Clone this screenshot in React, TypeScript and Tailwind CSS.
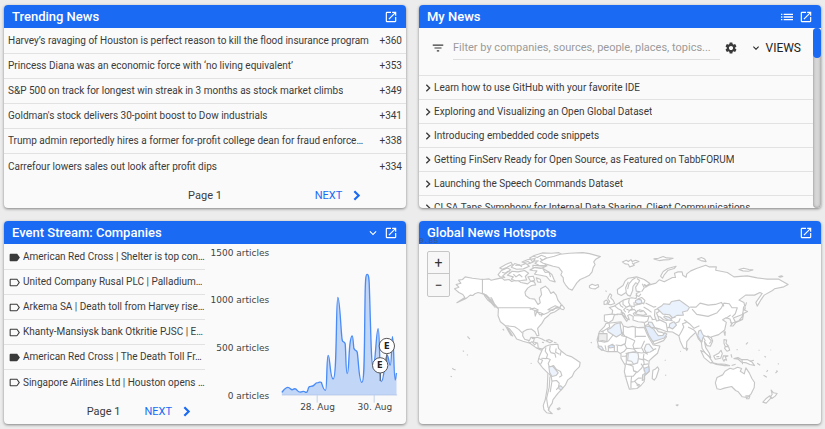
import type { FC, ReactNode } from "react";
import {
  MdChevronRight,
  MdExpandMore,
  MdFilterList,
  MdLabel,
  MdLabelOutline,
  MdList,
  MdOpenInNew,
  MdSettings,
} from "react-icons/md";

const trending = [
  { title: "Harvey’s ravaging of Houston is perfect reason to kill the flood insurance program", score: "+360" },
  { title: "Princess Diana was an economic force with ‘no living equivalent’", score: "+353" },
  { title: "S&P 500 on track for longest win streak in 3 months as stock market climbs", score: "+349" },
  { title: "Goldman's stock delivers 30-point boost to Dow industrials", score: "+341" },
  { title: "Trump admin reportedly hires a former for-profit college dean for fraud enforce…", score: "+338" },
  { title: "Carrefour lowers sales out look after profit dips", score: "+334" },
];

const myNews = [
  "Learn how to use GitHub with your favorite IDE",
  "Exploring and Visualizing an Open Global Dataset",
  "Introducing embedded code snippets",
  "Getting FinServ Ready for Open Source, as Featured on TabbFORUM",
  "Launching the Speech Commands Dataset",
  "CLSA Taps Symphony for Internal Data Sharing, Client Communications",
];

const events = [
  { title: "American Red Cross | Shelter is top con…", read: true },
  { title: "United Company Rusal PLC | Palladium…", read: false },
  { title: "Arkema SA | Death toll from Harvey rise…", read: false },
  { title: "Khanty-Mansiysk bank Otkritie PJSC | E…", read: false },
  { title: "American Red Cross | The Death Toll Fr…", read: true },
  { title: "Singapore Airlines Ltd | Houston opens …", read: false },
];

type PanelProps = {
  title: string;
  actions?: ReactNode;
  children: ReactNode;
};

const Panel: FC<PanelProps> = ({ title, actions, children }) => (
  <section className="relative flex min-w-0 flex-col overflow-hidden rounded bg-[#fafafa] shadow-[0_1px_3px_rgba(0,0,0,0.45)]">
    <header className="flex h-[23px] shrink-0 items-center justify-between bg-[#1a6af4] px-2 text-white">
      <h2 className="text-[13px] font-medium leading-5">{title}</h2>
      <div className="flex items-center gap-1">
        {actions}
        <button aria-label={`Open ${title}`}>
          <MdOpenInNew className="size-[14px]" />
        </button>
      </div>
    </header>
    {children}
  </section>
);

const Chevron: FC<{ className: string }> = ({ className }) => (
  <svg viewBox="0 0 12 12" fill="none" stroke="currentColor" className={className}>
    <path d="M4 2l4 4-4 4" />
  </svg>
);

const NextButton: FC = () => (
  <button className="flex items-center gap-2 text-[11px] text-[#1a6af4]">
    NEXT
    <Chevron className="size-[13px] stroke-2" />
  </button>
);

const TrendingNews: FC = () => (
  <Panel title="Trending News">
    <ul className="pt-px">
      {trending.map((item) => (
        <li
          key={item.title}
          className="flex h-[25px] items-center justify-between gap-1 border-b border-[#e2e2e2] px-1 last:border-b-0"
        >
          <span className="truncate">{item.title}</span>
          <span>{item.score}</span>
        </li>
      ))}
    </ul>
    <div className="grid h-[29px] grid-cols-3 items-center pt-1">
      <span className="col-start-2 text-center text-[11px]">Page 1</span>
      <div className="flex justify-center">
        <NextButton />
      </div>
    </div>
  </Panel>
);

const MyNews: FC = () => (
  <Panel
    title="My News"
    actions={
      <button aria-label="List view">
        <MdList className="size-4" />
      </button>
    }
  >
    <div className="flex h-0 grow">
      <div className="min-w-0 grow overflow-y-auto [scrollbar-width:none]">
        <div className="flex h-12 items-center border-b border-[#e2e2e2] px-3 pb-2">
          <MdFilterList className="size-[14px] shrink-0" />
          <input
            type="text"
            aria-label="Filter news"
            placeholder="Filter by companies, sources, people, places, topics..."
            className="ml-2 h-6 min-w-0 grow border-b border-[#dedede] bg-transparent text-[11px] outline-none placeholder:text-[#9a9a9a]"
          />
          <button aria-label="Settings" className="ml-1">
            <MdSettings className="size-[14px]" />
          </button>
          <button className="ml-3 flex items-center gap-1 text-xs text-[#222]">
            <MdExpandMore className="size-3" />
            VIEWS
          </button>
        </div>
        <ul>
          {myNews.map((title) => (
            <li key={title} className="flex h-6 items-center gap-px border-b border-[#e2e2e2] pl-1">
              <Chevron className="size-[10px] shrink-0 stroke-[1.6]" />
              <span className="truncate">{title}</span>
            </li>
          ))}
        </ul>
      </div>
      <div className="w-2 shrink-0 rounded-full bg-[#d6d6d6] shadow-[inset_0_0_3px_rgba(0,0,0,0.4)]">
        <div className="h-[30px] rounded-full bg-[#1a6af4]" />
      </div>
    </div>
  </Panel>
);

const seriesLine =
  "M247 532 C254 524 258 517 265 517 C272 517 274 526 279 524 C284 521 286 519 290 523 C296 529 298 533 304 531 C309 530 312 527 316 530 C320 534 323 533 325 525 C327 516 328 514 334 514 C341 514 343 511 346 508 C349 503 352 503 356 503 C362 502 363 499 366 503 C369 512 372 526 378 526 C383 526 381 421 386 421 C392 421 391 492 401 492 C413 492 409 247 415 247 C421 247 424 350 428 375 C430 384 434 377 437 386 C439 400 439 476 443 476 C448 476 447 430 451 390 C453 373 456 363 458 363 C461 363 462 395 463 400 C466 409 470 403 473 411 C477 430 478 502 487 502 C496 502 494 400 497 230 C498 190 499 178 503 178 C508 178 509 190 510 230 C514 350 515 455 521 455 C528 455 530 341 536 341 C541 341 540 500 545 500 C555 500 555 421 563 421 C568 421 568 450 572 450 C577 450 576 365 579 365 C583 365 583 495 587 495 C589 495 589 480 591 474";

const ArticlesChart: FC = () => (
  <svg
    viewBox="18 87 600 540"
    role="img"
    aria-label="Articles per day"
    className="h-[180px] min-w-0 grow font-['DejaVu_Sans',sans-serif]"
  >
    <g fill="#444" fontSize="27" textAnchor="end">
      <text x="209" y="122">1500 articles</text>
      <text x="209" y="264">1000 articles</text>
      <text x="209" y="407">500 articles</text>
      <text x="209" y="551">0 articles</text>
    </g>
    <g stroke="#c3d2ea" strokeWidth="3">
      <path d="M247 540H593M353 540V563M524 540V563" />
    </g>
    <path d={`${seriesLine}V539H247Z`} fill="#1a6af4" fillOpacity="0.25" />
    <path d={seriesLine} fill="none" stroke="#4a8cf7" strokeWidth="4" />
    <g fill="#444" fontSize="27" textAnchor="middle">
      <text x="354" y="585">28. Aug</text>
      <text x="526" y="585">30. Aug</text>
    </g>
    <g stroke="#555" strokeWidth="3" fill="#fff">
      <path d="M562 416V440M542 474V498" />
      <circle cx="562" cy="393" r="23" />
      <circle cx="542" cy="451" r="23" />
    </g>
    <g fill="#222" fontSize="25" fontWeight="bold" textAnchor="middle">
      <text x="562" y="402">E</text>
      <text x="541" y="460">E</text>
    </g>
  </svg>
);

const EventStream: FC = () => (
  <Panel
    title="Event Stream: Companies"
    actions={
      <button aria-label="Choose stream">
        <MdExpandMore className="size-[14px]" />
      </button>
    }
  >
    <div className="flex">
      <div className="w-1/2">
        <ul className="pt-px">
          {events.map((item) => (
            <li
              key={item.title}
              className="flex h-[25px] items-center gap-[2px] border-b border-[#e2e2e2] pl-1 last:border-b-0"
            >
              {item.read ? (
                <MdLabel className="size-[13px] shrink-0" />
              ) : (
                <MdLabelOutline className="size-[13px] shrink-0" />
              )}
              <span className="truncate">{item.title}</span>
            </li>
          ))}
        </ul>
        <div className="flex h-[29px] items-center justify-end gap-6 pr-3 pt-1">
          <span className="text-[11px]">Page 1</span>
          <NextButton />
        </div>
      </div>
      <ArticlesChart />
    </div>
  </Panel>
);

const WorldMap: FC = () => (
  <svg
    viewBox="12 87 1210 540"
    role="img"
    aria-label="World map"
    className="h-0 w-full grow"
    fill="#fff"
    stroke="#c6c6c6"
    strokeWidth="3.4"
    strokeLinejoin="round"
  >
    {/* North and Central America */}
    <path d="M119 221L132 216 124 208 138 204 131 195 143 193 151 185 173 189 203 193 223 191 229 195 247 191 261 188 269 195 283 193 291 199 307 194 319 202 339 206 349 198 359 200 363 209 351 211 339 219 331 231 333 241 345 250 360 252 370 268 377 263 374 249 381 239 378 221 392 213 402 222 409 235 417 230 425 240 430 255 440 268 436 278 422 272 410 278 400 284 415 286 424 278 438 279 420 291 408 295 400 303 390 311 382 325 369 340 373 361 367 362 361 350 350 342 336 344 325 350 324 362 330 373 344 377 349 367 360 368 356 381 369 384 371 399 384 402 380 406 364 398 346 385 325 379 306 372 296 356 284 341 277 337 285 349 294 363 288 360 272 332 257 320 250 302 251 281 236 268 222 251 208 237 190 232 180 236 174 241 166 240 155 249 126 263 150 247 144 238 132 232z" />
    <path
      fill="none"
      d="M203 191v44l12 5 14 14 20 24h98l8 6 14 5 6 10 12-1 14-6 10-7 18-8M208 240l10 14 12 10 12 14M214 240l13 18 13 14M222 250l8-2 10 20M272 332l28 3 12 8 12 12M345 283l14-4 12 6-11 4 2 14 4-12 12 2 7 4-6 7M340 380l6 4 6-4 8 10 6-6"
    />
    {/* Arctic archipelago */}
    <path d="M250 178l10-12 18-8 10 6-12 8-12 10 6 5-14-2zM278 180l14-12 18 2 20-4 12 8-10 10 4 10-16 2-18 1-12-5 6-7zM255 158l18-10 16-7 4 7-16 8-14 6zM290 156l10-11 18 6 16-6 10 8-18 8-20 1zM322 140l18-7 22-3-6 10-18 7zM346 164l16-8 22 3 16 10 12 9 6 14 4 8-16-4-10-12-18-4-18-3 7-10-13-1zM340 185l16-2 4 12-12 3zM345 128l16-8 22-7 28 1 22-2 12 8-20 7-16 11-18 8 6 6-24-2-12-6 10-7-19 1zM355 150l22 2 16 2-14 6-24-3zM365 188l12 4 2 10-10-2z" />
    <path
      fill="none"
      d="M262 171l10 3 8-6 9 5M296 177l8 8 10-7 9 8M302 151l12-2 8 6M354 122l14 5 12-7 14 5M385 161l7 11 11-2 5 16M328 142l12-3 8 5M376 129l8 6 14-8"
    />
    {/* Caribbean */}
    <path fill="none" d="M352 371l16-4 14 5 9 5M394 377l10-3 10 5-8 4zM382 382l6 1M418 382l8 2" />
    {/* Pacific islands */}
    <path fill="none" d="M158 364l3 4 4 4M144 407l3 3M156 419l3 2M112 460l4 3 6 2M107 484l4 2M264 342l4 4M348 445l3 1" />
    {/* Newfoundland */}
    <path d="M436 277l6-8 8 10-4 5-6-2z" />
    {/* South America */}
    <path d="M384 402L394 394 402 391 411 389 430 388 432 400 440 408 455 420 470 425 484 434 497 443 495 455 480 470 473 485 460 495 453 510 440 525 430 536 415 555 413 565 406 575 401 586 413 597 396 594 388 585 386 572 392 555 398 520 400 475 385 460 370 440 374 425z" />
    <path
      fill="none"
      d="M407 393l-2 12 4 8 12 3 3 12M394 397l-2 12 7 10-4 12-15-1M425 400l-2 12 12 6M440 408l-3 14M397 430l10 4-6 12 4 12M372 431l12 5-6 12M405 458l12-6 9 12 12 6 4 12-8 5M402 475l8 10 2 14 14-2 8 8-2 12-7 8M406 485l-2 32-8 34 4 26 4 8M412 500l-5 32"
    />
    <path fill="#edf3fd" d="M403 456l11-2 8 9 9 11-7 8-12 3-7-13z" />
    <path fill="#e3edfc" d="M433 514l6-1 6 6-5 6-7-3z" />
    <path d="M428 582l7-3 2 3-6 3z" />
    {/* Greenland, Iceland and northern islands */}
    <g transform="translate(405 75)">
      <path d="M-28 64l18-10 24-6 18-6 28-3 40-2 20 3 33 9-15 9-5 7 4 8-6 10-3 12-8 10-14 7-14 6-10 10-7 11-7 11-10-4-10-12-6-10-1-12-7-8 4-9-10-13-17-4-14-4-16-5z" />
      <path d="M120 137l8-5 10 4 8-3 2 7-10 6-12-1-6-3zM219 65l12-5 6 4 8-6 4 6 10-4 10 4-14 5-4 8-10 3-4-8-10-1zM314 56l14-2 14-5 10 4 20 1-12 4-16 1-14 2zM334 108l8-14 14-9 25-7-6 7-18 5-12 14-5 10zM168 152l4 2M248 67l8 9" />
      <path d="M445 56l12-4 10 4 4 8-15-3zM570 88l14-4 16 4 12 1-14 4-16-1zM690 109l8-2 4 2-8 2z" />
      {/* British Isles */}
      <path d="M177 170l5-9 5 4-3 8 7 7 5 10-12 4-9-2 6-8-6-8zM164 184l7-4 4 4-3 8-8 1z" />
    </g>
    {/* Eurasia mainland */}
    <path d="M570 318L570 300 593 297 595 286 585 277 600 273 615 263 627 255 643 250 652 248 665 250 668 242 666 235 678 230 666 228 664 216 671 206 664 203 656 214 655 226 648 243 640 240 635 232 621 241 610 236 609 223 626 211 632 198 642 189 667 185 690 193 707 205 697 212 690 208 694 216 706 209 725 204 735 194 750 200 775 187 784 187 781 174 792 170 804 170 806 180 816 186 818 176 830 167 847 160 875 150 886 155 907 155 905 165 940 172 960 185 1000 182 1030 188 1060 192 1095 192 1123 208 1110 215 1082 221 1076 226 1051 240 1040 256 1030 273 1026 262 1045 235 1038 232 1022 240 995 240 975 255 990 262 994 280 985 298 958 309 965 322 953 327 948 312 936 308 926 314 937 322 932 345 914 359 891 366 896 378 889 394 879 392 871 379 875 398 886 415 890 428 876 418 864 400 862 382 853 372 845 352 830 366 818 380 817 403 808 399 798 378 794 362 775 351 758 350 737 342 724 338 732 350 746 353 757 365 748 377 720 388 705 360 692 334 690 322 672 320 656 315 657 304 646 298 640 301 645 314 637 311 630 296 622 290 626 300 641 313 637 319 623 298 610 297 600 300 595 315 583 323z" />
    <path
      fill="none"
      d="M592 297l19 2M602 273l8 7 12 6-2 10M615 263l4 9 8 5M626 256v12l10 8-8 8 6 7M645 250l-2 12 4 8-8 6M636 276l12-4 12 3-1-14M648 272l6 8-8 6M636 282l10 4-4 7M646 286l14-3 6 7-9 5 4 7M668 290l8-6 10 3 5 8-10 6M662 270l14-3 14-4M670 252l12-5 10 9-4 12M664 240l10 4 6-8M640 222l4-16 10-12 10-6M672 204l4-8-8-6M682 230l8-12-6-12M636 232l-2-14 8-18M694 264l12 6 12 6 8-2M688 276l14 8 10 8M660 302l16 0 18 2 14-2 8 12M692 322l8-4 4-14M692 332l18-8 12 16 14 2"
    />
    <path
      fill="none"
      d="M712 314l16-2 12 4 16 8 4 24M726 302l12 4 10 8 10 2 12-4 8-10M760 338l12 0 8-12 14-6 4-10M748 284l14 6 8 12 14 6M795 362l8-14 6-12-4-10 12-4M810 314l16 12 14 14 16-8M822 336l16 8 8 8M828 276l18 0 12-12 24 6 22-2 18-6 8 12M834 282l14 16 34 6 26-10 14-16 8-14 16 2 8 12 16 0-6 18-10 10M856 346l10 18 8 14M868 362l14 4 10 12-6 8M880 362l12 6M936 310l14-10"
    />
    {/* Black Sea and Caspian Sea */}
    <path fill="#fafafa" d="M663 297l8-11 9 4 8-3 9 11-10 3-12-2zM722 284l10-3 3 8-8 5 5 12 3 10-8 2-6-16z" />
    {/* Shaded countries */}
    <path fill="#eaf2fe" d="M729 280l14-8 5-6 18 2 6-9 24-4 14 10 16 12-6 10-15 4 3 9-20 1-12 8-10-10-20-2z" />
    <path fill="#eaf2fe" d="M750 303l16 4 8 10-14-3-11-7zM767 326l12-6 8 10-12 12-10-6zM664 256l9-4 8 3 2 9-12 3-8-5z" />
    <path fill="#e3edfb" d="M692 333l12 1 14 8 8 12 6 8 14-1 6-8 6 4-8 12-18 6-16 5-12-18z" />
    <path fill="#edf4fe" d="M703 321l10 1 9 16-11-1-9-9z" />
    <path fill="#e6effd" d="M854 348l6-3 5 12 5 6-4 6-2 12-7-8-6-11z" />
    {/* Africa */}
    <path d="M575 325L595 323 620 320 627 333 641 337 655 334 672 338 690 337 697 354 705 370 717 390 737 393 730 415 716 427 705 437 703 455 705 470 690 483 690 500 680 512 668 521 645 523 637 497 630 470 633 452 620 430 620 417 610 410 580 410 563 405 552 392 548 375 555 350 570 335z" />
    <path
      fill="none"
      d="M584 326l2 10-18 11-10 4M556 356h10v-10M618 321l-3 12 9 22 8 8M627 333v24l-6 6M596 360l-14 18-12 4-16-4M624 363l12 2 26 12M663 336v32M663 364h32M636 366l-3 20-13 6-16-2M662 377l-6 14 3 10 22-2 10-22M631 388l6 12-8 10-10 5M638 400l20 2 8 8-20 3-12 3M590 398l6-12M609 393v16M600 393v16M582 396v13M572 391l3 14M622 424h12l6-8M668 412l14 2 16-3 18-6 10-4M683 400l6 12 12 6M689 417l-2 14 16 8M638 416l-2 12 0 20M666 413l4 14-3 16-10 5-22 0M672 431l16 4 2 14 12-2M632 447l14 3 10 4 2 14 9 4-10 12-26 0M660 468l10 4 12-12 6-12M652 484l-2 18 10-2 12-10 10 0M650 500v20M662 500l12 14M680 446l10 14 0 10"
    />
    <path fill="#eaf2fe" d="M588 340l14-13 15-4 2 15 3 18-16 10-25-16-2-6z" />
    <path fill="#ededed" d="M553 356h25v24l-14-3-12 2z" />
    <path fill="#f4f8ff" d="M642 414l14-2 15 2 2 12-3 18-12 4-6-9-12-2zM696 388l8-1 8 10 6 8-10 6-12 2-6-11z" />
    <path fill="#d8e6fb" d="M581 394l10-5 9 3-1 5-12 2zM689 461l15-6 1 14-14 13v12l-7 3 1-17 8-5z" />
    <path fill="#e3edfb" d="M551 393l10 1 6 9-5 3-11-9z" />
    <path fill="#f4f8ff" d="M671 508l5 2-4 4-4-3z" />
    {/* Madagascar and small islands */}
    <path d="M716 466l8-4 6-6 4 7-8 25-6 8-6-5 1-14zM529 382l3 2M752 435l2 2M753 480l3 2M798 409l2 1M786 571l6-1-3 3zM816 398l5 3-3 6z" />
    {/* Japan, Philippines and South-East Asia */}
    <path d="M989 275l2 10 10 4-12 6-3 18-20 9-9 11-8 0 8-10 18-6 10-12 2-12zM998 262l-4 12M950 321l5 7M930 351l4-1-1 11zM930 374l8 1-2 10 7 8-9 2-4-10zM934 394l10 2 3 10-8 3-7-9zM860 407l10 4 15 14 12 18-8 1-19-16zM892 443l18 4 23 1 14 4-18 0-22-3zM899 423l16-9 6-8 4 10-5 14-16 3zM928 423l14 0-8 3 4 10-6-2-2 5-4-7zM951 418l3 10M960 431l12-3 10 6 18 0 14 7 8 11-14-3-10-5-15-2-10-9-10-2z" />
    <path
      fill="none"
      d="M984 434l2 14M1008 439l12-3M1030 445l9 6M996 388l6-6M968 404h3M1034 406h3M1070 405h2M1062 466l-4 5M1049 481l10 6M1085 475l6-6-4-1M1092 447h3M1052 424l4 3M953 452l12-4M907 425l9 0"
    />
    {/* Australia and New Zealand */}
    <path d="M909 488l17-8 7-11 15-9 10 3 5-2 8-4 12 4-4 8 12 8 5-18 10 15 8 17 8 12-1 15-10 20-11 10-15-2-12-15-8-4-12-12-22 5-12 4-10-2-5-18zM996 543l12 0-3 9-7 0zM1072 526l7 8 11 2-6 8-10 7-5-4 6-8zM1068 543l5 5-16 17-10-3 9-10z" />
  </svg>
);

const Hotspots: FC = () => (
  <Panel title="Global News Hotspots">
    <WorldMap />
    <span className="absolute left-0 top-4 font-['Liberation_Mono',monospace] text-[8px] leading-2 text-[#3f5685]">
      0.85
    </span>
    <div className="absolute left-2 top-[30px] flex w-[23px] flex-col divide-y divide-[#c6c6c6] rounded-xs border border-[#c6c6c6] bg-[#f7f7f7] text-sm text-[#333]">
      <button aria-label="Zoom in" className="h-[22px] leading-5">
        +
      </button>
      <button aria-label="Zoom out" className="h-[22px] leading-5">
        −
      </button>
    </div>
  </Panel>
);

const App: FC = () => (
  <main className="grid min-h-screen grid-cols-2 content-start gap-[13px] bg-[#ececec] px-1 py-[5px] font-[Roboto,sans-serif] text-[10px] leading-4 text-[#3a3a3a]">
    <TrendingNews />
    <MyNews />
    <EventStream />
    <Hotspots />
  </main>
);

export default App;
